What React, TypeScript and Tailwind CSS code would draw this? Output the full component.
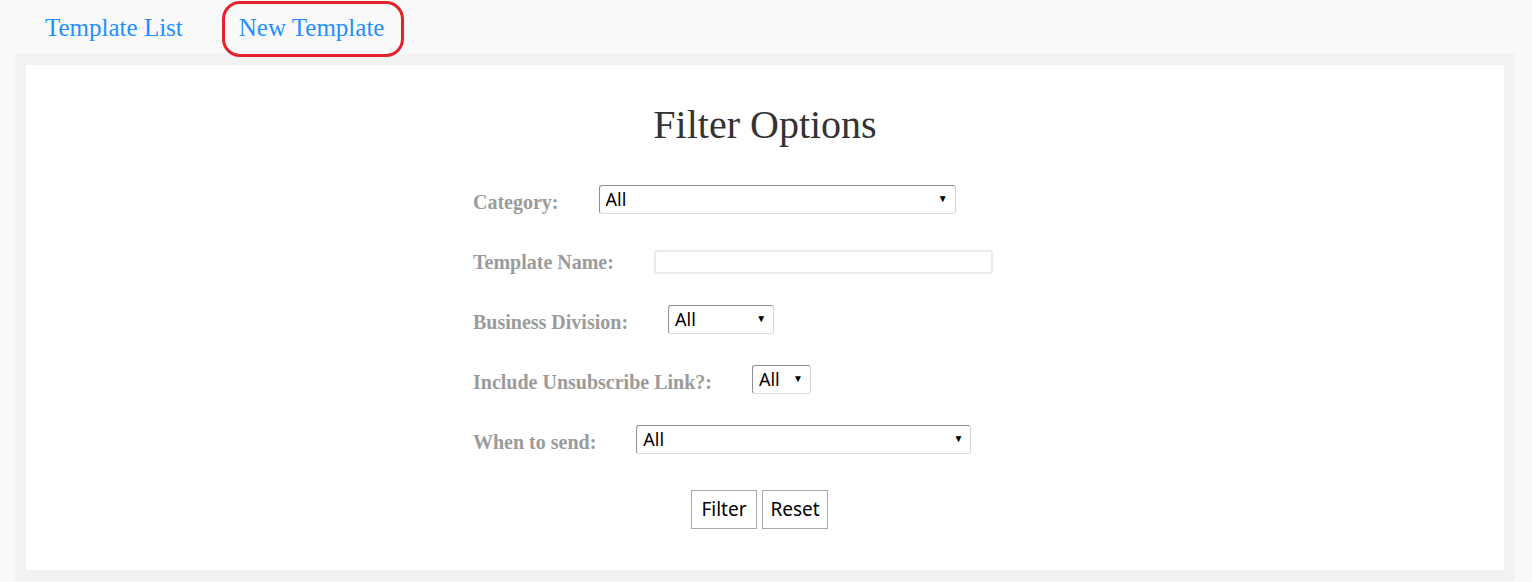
import * as React from 'react';

const serif = { fontFamily: '"Liberation Serif", "Times New Roman", serif' };
const sans = { fontFamily: '"Noto Sans", "Open Sans", sans-serif' };

type SelectProps = { width: string };

const FakeSelect: React.FC<SelectProps> = ({ width }) => (
  <div className={`relative h-[29px] ${width}`}>
    <select
      style={sans}
      defaultValue="all"
      className="h-full w-full appearance-none rounded-[3px] border border-t-[#8f8f8f] border-l-[#8f8f8f] border-r-[#d4d4d4] border-b-[#dcdcdc] bg-white pl-[6px] text-[18px] text-black outline-none"
    >
      <option value="all">All</option>
    </select>
    {/* dropdown arrow */}
    <span className="pointer-events-none absolute right-[8px] top-[8px] text-[10px] leading-none text-black">▼</span>
  </div>
);

const Row: React.FC<{ label: string; children: React.ReactNode }> = ({ label, children }) => (
  <div className="flex h-[60px] items-end gap-10">
    <label style={serif} className="text-[20px] font-bold leading-[23px] text-[#9b9b9b]">
      {label}
    </label>
    {children}
  </div>
);

const App: React.FC = () => {
  return (
    <div className="min-h-screen bg-[#f9f9f9]">
      <nav style={serif} className="flex h-[54px] items-start text-[25px] leading-[28px] text-[#1e90ff]">
        <a href="#" className="ml-[45px] mt-[14px]">
          Template List
        </a>
        <a
          href="#"
          className="relative z-10 ml-[39px] mt-[1px] h-[56px] rounded-[18px] border-[3px] border-[#e3222b] pl-[14px] pr-[17px] pt-[10px]"
        >
          New Template
        </a>
      </nav>

      <div className="ml-[15px] mr-[17px] bg-[#f2f2f2] p-[11px]">
        <div className="bg-white pb-[41px] pt-[40px]">
          <h2 style={serif} className="text-center text-[40px] leading-[40px] text-[#333]">
            Filter Options
          </h2>

          <div className="mx-auto mt-[9px] w-[584px]">
            <Row label="Category:">
              <FakeSelect width="w-[357px]" />
            </Row>
            <Row label="Template Name:">
              <input
                type="text"
                className="h-[24px] w-[339px] rounded-[3px] border-2 border-[#ebebeb] bg-white outline-none"
              />
            </Row>
            <Row label="Business Division:">
              <FakeSelect width="w-[106px]" />
            </Row>
            <Row label="Include Unsubscribe Link?:">
              <FakeSelect width="w-[59px]" />
            </Row>
            <Row label="When to send:">
              <FakeSelect width="w-[335px]" />
            </Row>

            <div style={sans} className="mt-[36px] flex gap-[5px] pl-[218px] text-[19px] text-black">
              <button className="h-[39px] w-[66px] border border-[#aaa] bg-white">Filter</button>
              <button className="h-[39px] w-[66px] border border-[#aaa] bg-white">Reset</button>
            </div>
          </div>
        </div>
      </div>
    </div>
  );
};

export default App;
